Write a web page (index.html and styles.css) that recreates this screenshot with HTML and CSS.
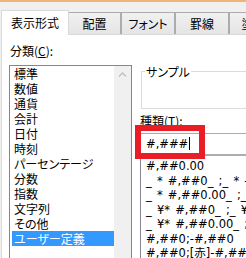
FILE: index.html
```html
<!DOCTYPE html>
<html lang="ja">
<head>
  <meta charset="UTF-8">
  <title>セルの書式設定</title>
  <link rel="stylesheet" href="styles.css">
</head>
<body>

<div class="window-edge"></div>

<div class="tabs">
  <div class="tab active">表示形式</div>
  <div class="tab first-after">配置</div>
  <div class="tab w54">フォント</div>
  <div class="tab w54">罫線</div>
  <div class="tab w80">塗りつぶし</div>
</div>

<div class="page">
  <div class="col-left">
    <div class="label">分類(<u>C</u>):</div>
    <div class="listbox">
      <ul class="items">
        <li>標準</li>
        <li>数値</li>
        <li>通貨</li>
        <li>会計</li>
        <li>日付</li>
        <li>時刻</li>
        <li>パーセンテージ</li>
        <li>分数</li>
        <li>指数</li>
        <li>文字列</li>
        <li>その他</li>
        <li class="selected">ユーザー定義</li>
      </ul>
      <div class="scrollbar">
        <svg class="arrow" width="17" height="17" viewBox="0 0 17 17">
          <polyline points="5,10.5 8.5,7 12,10.5" fill="none" stroke="#bfbfbf" stroke-width="1.3"/>
        </svg>
      </div>
    </div>
  </div>

  <div class="col-right">
    <fieldset class="sample">
      <legend>サンプル</legend>
    </fieldset>
    <div class="label">種類(<u>T</u>):</div>
    <div class="type-wrap">
      <div class="type-input">#,###<span class="caret"></span></div>
      <div class="mark"></div>
    </div>
    <ul class="codes">
      <li>#,##0.00</li>
      <li>_ * #,##0_ ;_ * -#,##0_ ;_ * "-"_ ;_ @_ </li>
      <li>_ * #,##0.00_ ;_ * -#,##0.00_ ;_ * "-"??_ ;_ @_ </li>
      <li>_ ¥* #,##0_ ;_ ¥* -#,##0_ ;_ ¥* "-"_ ;_ @_ </li>
      <li>_ ¥* #,##0.00_ ;_ ¥* -#,##0.00_ ;_ ¥* "-"??_ ;_ @_ </li>
      <li>#,##0;-#,##0</li>
      <li>#,##0;[赤]-#,##0</li>
    </ul>
  </div>
</div>

</body>
</html>
```

FILE: styles.css
```css
* {
  box-sizing: border-box;
}

body {
  margin: 0;
  width: 246px;
  height: 258px;
  overflow: hidden;
  background-color: #f0f0f0;
  font-family: "Noto Sans CJK JP", sans-serif;
  font-size: 12px;
  font-feature-settings: "palt";
  color: #000;
}

.window-edge {
  height: 2px;
  background-color: #efb47a;
}

/* tab strip */
.tabs {
  display: flex;
  align-items: flex-end;
  height: 25px;
  margin-top: 8px;
  padding-left: 1px;
  position: relative;
  z-index: 1;
}

.tab {
  flex: none;
  width: 52px;
  height: 22px;
  margin-bottom: 1px;
  border: 1px solid #acacac;
  border-bottom: none;
  background: linear-gradient(#f0f0f0, #e5e5e5);
  text-align: center;
  line-height: 21px;
  white-space: nowrap;
  overflow: hidden;
}

.tab.active {
  width: 68px;
  height: 25px;
  margin-bottom: 0;
  border-color: #d9d9d9;
  background: #fff;
  line-height: 23px;
}

.tab.first-after {
  border-left: none;
}

.tab.w54 { width: 54px; }
.tab.w80 { width: 80px; }

/* tab page */
.page {
  display: flex;
  gap: 8px;
  width: 340px;
  height: 240px;
  margin: -1px 0 0 1px;
  padding: 8px 0 0 7px;
  border: 1px solid #d9d9d9;
  background-color: #fff;
}

.label {
  line-height: 15px;
  padding-left: 1px;
}

.col-left {
  flex: none;
  width: 123px;
}

.listbox {
  display: flex;
  height: 200px;
  margin-top: 7px;
  border: 1px solid #828790;
}

.items {
  flex: 1;
  list-style: none;
  margin: 0;
  padding: 0;
}

.items li {
  margin-left: 2px;
  padding-left: 2px;
  line-height: 15px;
  white-space: nowrap;
}

.items li.selected {
  background-color: #3399ff;
  color: #fff;
}

.scrollbar {
  flex: none;
  width: 17px;
  background-color: #f0f0f0;
}

.arrow {
  display: block;
}

.col-right {
  flex: none;
  width: 200px;
}

.sample {
  height: 45px;
  margin: 21px 0 0 1px;
  padding: 0 0 0 3px;
  border: 1px solid #dcdcdc;
}

.sample legend {
  padding: 0 1px;
  line-height: 15px;
}

.col-right .label {
  margin-top: 4px;
  padding-left: 0;
}

.type-wrap {
  position: relative;
  margin-top: 5px;
}

.type-input {
  height: 22px;
  padding-left: 5px;
  border: 1px solid #abadb3;
  font-family: "DejaVu Sans", "Noto Sans CJK JP", sans-serif;
  font-size: 11.5px;
  line-height: 20px;
  white-space: nowrap;
}

.caret {
  display: inline-block;
  width: 1px;
  height: 13px;
  margin-left: 1px;
  vertical-align: -2px;
  background-color: #000;
}

/* red highlight drawn over the type box */
.mark {
  position: absolute;
  left: -5px;
  top: -8px;
  width: 70px;
  height: 34px;
  border: 6px solid #e81d25;
}

.codes {
  list-style: none;
  margin: 0;
  padding: 3px 0 0 0;
  height: 120px;
  border: 1px solid #828790;
  border-top-color: #abadb3;
  font-family: "DejaVu Sans", "Noto Sans CJK JP", sans-serif;
  font-size: 11.5px;
  word-spacing: 1.5px;
  overflow: hidden;
}

.codes li {
  padding-left: 5px;
  line-height: 14.5px;
  white-space: nowrap;
}
```
